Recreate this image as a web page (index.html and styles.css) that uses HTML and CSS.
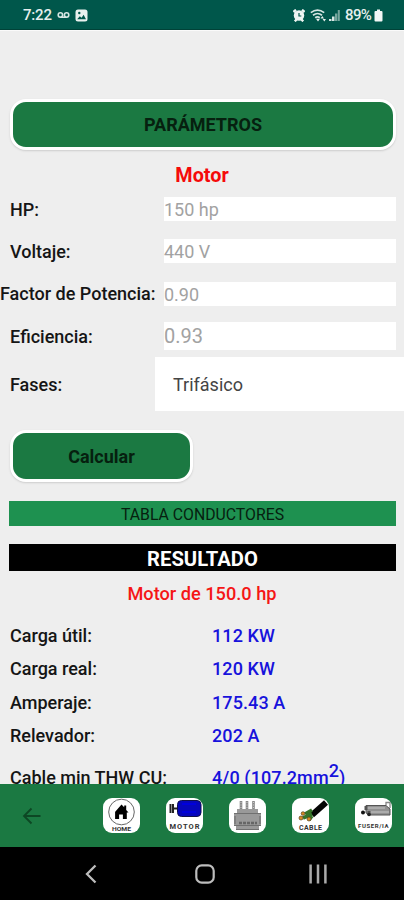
FILE: index.html
```html
<!DOCTYPE html>
<html lang="es">
<head>
    <meta charset="UTF-8">
    <title>Motor</title>
    <link rel="stylesheet" href="styles.css">
</head>
<body>
<div class="status">
    <span class="time">7:22</span>
    <svg class="mail" width="13" height="8" viewBox="0 0 13 8"><g fill="none" stroke="#d7e6e3" stroke-width="1.6"><circle cx="3.4" cy="4" r="2.2"/><circle cx="9.6" cy="4" r="2.2"/><path d="M3.4 6.2h6"/></g></svg>
    <svg class="photo" width="13" height="13" viewBox="0 0 13 13"><rect x=".5" y=".5" width="12" height="12" rx="2.5" fill="#e9f1ef"/><circle cx="4.3" cy="4" r="1.2" fill="#00574b"/><path d="M2.2 10.2l2.6-3 1.8 1.5 2-3 2.4 4.5z" fill="#00574b"/></svg>
    <span class="space"></span>
    <svg class="alarm" width="12" height="13" viewBox="0 0 12 13"><path d="M.5 3L3 .8M11.5 3L9 .8M1.800 12.3l1.7-1.800M10.200 12.3l-1.700-1.800" stroke="#eef5f3" stroke-width="2.400"/><circle cx="6" cy="6.5" r="5.200" fill="#eef5f3"/><path d="M6 4v3h2.3" fill="none" stroke="#00574b" stroke-width="1.2"/></svg>
    <svg class="wifi" width="17" height="13" viewBox="0 0 17 13"><g fill="none" stroke="#d7e6e3" stroke-width="1.7"><path d="M.8 3.6Q7.5-1.4 14.2 3.6M3 6.2q4.5-3.4 9 0M5.2 8.7q2.3-1.7 4.6 0"/></g><path d="M6 9.8h4l-2 2.6zM10.5 9.5l1.8-2.6 1.7 2.6zM12.6 10l1.7 2.5L16 10z" fill="#e9f1ef"/></svg>
    <svg class="signal" width="11" height="12" viewBox="0 0 11 12"><path d="M0 12V10h2.500v2zM3 12V7.5h2.500V12z" fill="#d7e6e3"/><path d="M6 12V4.5h2.300V12zM8.800 12V1h2v11z" fill="#76a69d"/></svg>
    <span class="level">89%</span>
    <svg class="battery" width="9" height="13" viewBox="0 0 9 13"><path d="M3 .5h3V2h1.5q1 0 1 1v8.500q0 1-1 1h-6q-1 0-1-1V3q0-1 1-1H3z" fill="#f2f7f6"/></svg>
</div>

<div class="content">
    <div class="btn wide">PARÁMETROS</div>
    <h1 class="title">Motor</h1>

    <div class="form">
        <div class="row"><span class="label">HP:</span><span class="field">150 hp</span></div>
        <div class="row"><span class="label">Voltaje:</span><span class="field">440 V</span></div>
        <div class="row"><span class="label long">Factor de Potencia:</span><span class="field">0.90</span></div>
        <div class="row"><span class="label">Eficiencia:</span><span class="field big">0.93</span></div>
        <div class="row phases"><span class="label">Fases:</span><span class="select">Trifásico</span></div>
    </div>

    <div class="btn calc">Calcular</div>
    <div class="table-btn">TABLA CONDUCTORES</div>
    <h2 class="result">RESULTADO</h2>
    <div class="subtitle">Motor de 150.0 hp</div>

    <div class="data">
        <div class="line"><span class="name">Carga útil:</span><span class="value">112 KW</span></div>
        <div class="line"><span class="name">Carga real:</span><span class="value">120 KW</span></div>
        <div class="line"><span class="name">Amperaje:</span><span class="value">175.43 A</span></div>
        <div class="line"><span class="name">Relevador:</span><span class="value">202 A</span></div>
        <div class="line last"><span class="name">Cable min THW CU:</span><span class="value">4/0 (107.2mm<sup>2</sup>)</span></div>
    </div>
</div>

<div class="toolbar">
    <svg class="back" width="20" height="18" viewBox="0 0 20 18"><path d="M18.500 9H2M9.500 1.500L2 9l7.500 7.500" fill="none" stroke="#0d4724" stroke-width="1.800"/></svg>
    <div class="icons">
        <svg class="icon" viewBox="0 0 37 35">
            <rect width="37" height="35" rx="9" fill="#fff"/>
            <circle cx="18.500" cy="14" r="12.800" fill="none" stroke="#666" stroke-width="1"/>
            <path d="M12 14l6.500-7.500 2.700 2.800V7.500h2V12l2.300 2.500h-1.700V21h-3.900v-4.500h-3.800V21h-4v-7z" fill="#000"/>
            <text x="9" y="33" textLength="19" lengthAdjust="spacingAndGlyphs" class="tag small">HOME</text>
        </svg>
        <svg class="icon" viewBox="0 0 37 35">
            <rect width="37" height="35" rx="9" fill="#fff"/>
            <path d="M4.500 6v9M7 6v9M7 10.500h5" stroke="#222" stroke-width="2"/>
            <rect x="11.500" y="2.500" width="23.500" height="16" rx="4" fill="#0505bb" stroke="#10104a"/>
            <path d="M16 6h14M16 14h14" stroke="#0000dd" stroke-width="2"/>
            <text x="3.500" y="30.500" textLength="30" class="tag">MOTOR</text>
        </svg>
        <svg class="icon" viewBox="0 0 37 35">
            <rect width="37" height="35" rx="9" fill="#fff"/>
            <path d="M12 3v9M18 3v9M24.500 3v9" stroke="#888" stroke-width="2.600"/>
            <path d="M12 4v8M18 4v8M24.500 4v8" stroke="#ccc" stroke-width="1" stroke-dasharray="1 1.500"/>
            <path d="M8 11h21v4h3v13h-2v4H7v-4H5V15h3z" fill="#999"/>
            <path d="M5 15.500h27M5 27.500h27M6 18v8M31 18v8M7 31.500h23" stroke="#707070" stroke-width="1.200"/>
            <path d="M10 25h18" stroke="#666" stroke-width="2.600" stroke-dasharray="3 1"/>
        </svg>
        <svg class="icon" viewBox="0 0 37 35">
            <rect width="37" height="35" rx="9" fill="#fff"/>
            <path d="M34 4.500L20 17" stroke="#050505" stroke-width="6"/>
            <path d="M20 12l-7 4M20 16l-9 4M20 18l-3 4" stroke="#367329" stroke-width="3.600"/>
            <g fill="#d88922" stroke="#53401e" stroke-width=".7"><circle cx="11" cy="15.500" r="1.800"/><circle cx="9" cy="20" r="2"/><circle cx="17" cy="21" r="2"/></g>
            <text x="7" y="31.500" textLength="23" class="tag cable">CABLE</text>
        </svg>
        <svg class="icon" viewBox="0 0 37 35">
            <rect width="37" height="35" rx="9" fill="#fff"/>
            <path d="M11 7.500h20l4 3.500v6H15l-4-2z" fill="#929292" stroke="#555"/>
            <path d="M12 10h18M15 14h19" stroke="#b5b5b5" stroke-width="1.300"/>
            <path d="M31 7V4.500h4V10" fill="none" stroke="#888" stroke-width="1.300"/>
            <path d="M11 8v4M14 13v4" stroke="#555" stroke-width="3"/>
            <circle cx="8" cy="14.500" r="2" fill="#111"/><circle cx="14" cy="16.500" r="1.800" fill="#222"/>
            <text x="3" y="30" textLength="30.500" class="tag small">FUSER/IA</text>
        </svg>
    </div>
</div>

<div class="nav">
    <svg width="12" height="20" viewBox="0 0 12 20"><path d="M10.500 1.500L2 10l8.500 8.500" fill="none" stroke="#bdbdbd" stroke-width="2.300"/></svg>
    <svg class="home" width="20" height="20" viewBox="0 0 20 20"><rect x="1.300" y="1.300" width="17.400" height="17.400" rx="5.500" fill="none" stroke="#bdbdbd" stroke-width="2.200"/></svg>
    <svg width="18" height="20" viewBox="0 0 18 20"><path d="M1.600 .5v19M9 .5v19M16.400 .5v19" stroke="#aaa" stroke-width="2.500"/></svg>
</div>
</body>
</html>
```
FILE: styles.css
```css
*{
    margin: 0;
    padding: 0;
    box-sizing: border-box;
}
body{
    width: 404px;
    height: 900px;
    overflow: hidden;
    display: flex;
    flex-direction: column;
    background: #eee;
    font-family: Roboto, "Liberation Sans", sans-serif;
    font-weight: 500;
    color: #151515;
}
svg{
    display: block;
    flex: none;
}
.status{
    height: 30px;
    flex: none;
    padding: 1px 21px 0 23px;
    display: flex;
    align-items: center;
    background: #00574b;
    border-bottom: 1px solid #004238;
    color: #e6efed;
    font-size: 15px;
    font-weight: 500;
}
.time{
    width: 34px;
    letter-spacing: -0.2px;
}
.photo{
    margin-left: 5px;
}
.space{
    flex: 1;
}
.alarm{
    margin-right: 5px;
}
.signal{
    margin-left: 2px;
}
.level{
    margin-left: 5px;
    width: 29px;
    letter-spacing: -0.6px;
}
.content{
    height: 754px;
    flex: none;
    overflow: hidden;
    border-top: 1px solid #fafafa;
}
.btn{
    height: 51px;
    margin-left: 10px;
    display: flex;
    align-items: center;
    justify-content: center;
    background: #1b7942;
    border: 3px solid #fff;
    border-radius: 16px;
    box-shadow: 0 1px 2px #ccc;
    font-weight: 700;
    font-size: 18px;
    color: #06200f;
}
.wide{
    width: 386px;
    margin-top: 68px;
}
.title{
    margin-top: 14px;
    height: 24px;
    line-height: 24px;
    text-align: center;
    font-size: 19.800px;
    font-weight: 700;
    color: #f50a0a;
}
.row{
    height: 42.300px;
    display: flex;
    align-items: center;
}
.label{
    width: 164px;
    flex: none;
    padding-left: 10px;
    font-size: 18px;
    white-space: nowrap;
}
.long{
    padding-left: 0;
}
.field{
    width: 232px;
    height: 24px;
    line-height: 25px;
    background: #fff;
    font-size: 18px;
    font-weight: 400;
    color: #a2a2a2;
}
.big{
    height: 28px;
    line-height: 29px;
    font-size: 20px;
}
.phases{
    height: 54px;
}
.phases .label{
    width: 155px;
}
.select{
    flex: 1;
    height: 54px;
    line-height: 55px;
    padding-left: 18px;
    background: #fff;
    font-size: 18px;
    font-weight: 400;
    color: #444;
}
.calc{
    width: 183px;
    height: 52px;
    margin-top: 19px;
}
.table-btn{
    margin: 19px 8px 0 9px;
    height: 25px;
    line-height: 27px;
    background: #1e9150;
    text-align: center;
    font-size: 15.800px;
    font-weight: 400;
    color: #06200f;
}
.result{
    margin: 18px 8px 0 9px;
    height: 27px;
    line-height: 30px;
    background: #000;
    text-align: center;
    font-size: 20.200px;
    font-weight: 700;
    color: #fff;
}
.subtitle{
    height: 44px;
    line-height: 45px;
    text-align: center;
    font-size: 18.200px;
    color: #f51616;
}
.data{
    padding: 4px 0 0 10px;
}
.line{
    display: flex;
    height: 33.300px;
    line-height: 33.300px;
    font-size: 18px;
    white-space: nowrap;
}
.name{
    width: 202px;
}
.value{
    color: #1712dc;
    letter-spacing: 0.1px;
}
.last{
    margin-top: 9px;
}
sup{
    font-size: 18px;
    line-height: 0;
    vertical-align: 7px;
}
.toolbar{
    height: 63px;
    flex: none;
    display: flex;
    align-items: center;
    padding: 0 12px 0 22px;
    background: #1b7942;
}
.icons{
    margin-left: auto;
    display: flex;
    gap: 26px;
}
.icon{
    width: 37px;
    height: 35px;
}
.tag{
    font-family: Roboto, sans-serif;
    font-size: 7.500px;
    font-weight: 700;
    fill: #333;
}
.cable{
    font-size: 7px;
}
.small{
    font-size: 6px;
}
.nav{
    height: 53px;
    flex: none;
    display: flex;
    align-items: center;
    justify-content: space-between;
    padding: 0 77px 0 85px;
    background: #000;
}
.home{
    margin-left: 3px;
}
```
